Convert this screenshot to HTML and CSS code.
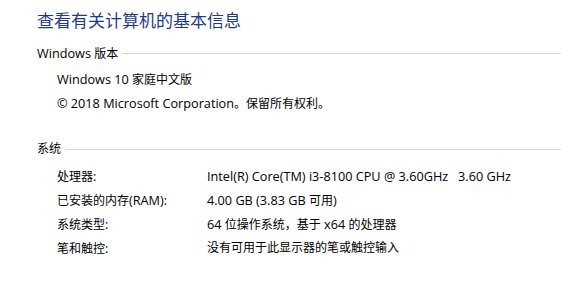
FILE: index.html
```html
<!DOCTYPE html>
<html lang="zh-CN">
<head>
<meta charset="utf-8">
<title>系统</title>
<link rel="stylesheet" href="styles.css">
</head>
<body>
<div class="page">
  <h1 class="title">查看有关计算机的基本信息</h1>
  <div class="section-head sec1"><span class="head-text"><span class="lat">Windows </span>版本</span><div class="rule"></div></div>
  <div class="list">
    <div class="line"><span class="lat">Windows 10 </span>家庭中文版</div>
    <div class="line"><span class="lat">© 2018 Microsoft Corporation</span>。保留所有权利。</div>
  </div>
  <div class="section-head sec2"><span class="head-text">系统</span><div class="rule"></div></div>
  <div class="grid">
    <div class="label">处理器<span class="lat">:</span></div><div class="value"><span class="lat">Intel(R) Core(TM) i3-8100 CPU @ 3.60GHz&nbsp;&nbsp;&nbsp;3.60 GHz</span></div>
    <div class="label">已安装的内存<span class="lat">(RAM):</span></div><div class="value"><span class="lat">4.00 GB (3.83 GB </span>可用<span class="lat">)</span></div>
    <div class="label">系统类型<span class="lat">:</span></div><div class="value"><span class="lat">64 </span>位操作系统，基于<span class="lat"> x64 </span>的处理器</div>
    <div class="label">笔和触控<span class="lat">:</span></div><div class="value">没有可用于此显示器的笔或触控输入</div>
  </div>
</div>
</body>
</html>
```

FILE: styles.css
```css
html, body {
  margin: 0;
  padding: 0;
  background: #ffffff;
}
body {
  font-family: "Open Sans", "Noto Sans CJK SC", sans-serif;
  font-size: 12px;
  color: #000000;
}
.lat {
  font-size: 12.7px;
}
.page {
  padding-left: 37px;
}
.title {
  margin: 0;
  padding-top: 8px;
  font-size: 17px;
  line-height: 24px;
  font-weight: normal;
  color: #1c3a8e;
  font-family: "Noto Sans CJK SC", sans-serif;
}
.section-head {
  display: flex;
  align-items: center;
  height: 16px;
  line-height: 16px;
}
.head-text {
  margin-right: 4px;
  white-space: nowrap;
}
.rule {
  flex: 1;
  border-top: 1px solid #d4d4d4;
}
.sec1 {
  margin-top: 13px;
}
.list {
  padding-left: 20px;
  padding-top: 6px;
}
.line {
  line-height: 24px;
  height: 24px;
  white-space: nowrap;
}
.sec2 {
  margin-top: 26px;
}
.grid {
  display: grid;
  grid-template-columns: 150px auto;
  grid-auto-rows: 24px;
  align-items: center;
  padding-left: 20px;
  margin-top: 7px;
}
.label, .value {
  line-height: 24px;
  white-space: nowrap;
}
```
